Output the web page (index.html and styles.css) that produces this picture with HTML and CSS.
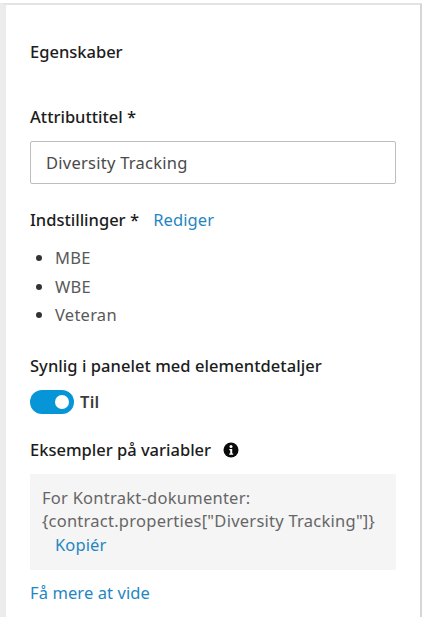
FILE: index.html
```html
<!DOCTYPE html>
<html lang="da">
<head>
<meta charset="utf-8">
<title>Egenskaber</title>
<link rel="stylesheet" href="styles.css">
</head>
<body>
<main class="panel">
  <h2 class="title">Egenskaber</h2>
  <label class="label label-attr">Attributtitel *</label>
  <div class="input">Diversity Tracking</div>
  <div class="label label-opts">Indstillinger * <a class="link edit">Rediger</a></div>
  <ul class="options">
    <li>MBE</li>
    <li>WBE</li>
    <li>Veteran</li>
  </ul>
  <div class="label label-vis">Synlig i panelet med elementdetaljer</div>
  <div class="toggle-row">
    <span class="toggle"><span class="knob"></span></span>
    <span class="toggle-text">Til</span>
  </div>
  <div class="label label-ex">Eksempler på variabler
    <svg class="info" viewBox="0 0 16 16" width="16" height="16" aria-hidden="true">
      <circle cx="8" cy="8" r="7.5" fill="#0a0a0a"/>
      <circle cx="8" cy="4.4" r="1.5" fill="#fff"/>
      <path d="M6.3 6.9h2.9v4.6h1v1.3H6.2v-1.3h1V8.2h-.9z" fill="#fff"/>
    </svg>
  </div>
  <div class="examples">
    <div>For Kontrakt-dokumenter:</div>
    <div>{contract.properties["Diversity Tracking"]}</div>
    <a class="link copy">Kopiér</a>
  </div>
  <a class="link more">Få mere at vide</a>
</main>
</body>
</html>
```
FILE: styles.css
```css
html, body {
  margin: 0;
  height: 100%;
  background: #fff;
}
body {
  overflow: hidden;
  font-family: "Noto Sans", "Open Sans", sans-serif;
  font-size: 16.5px;
  letter-spacing: 0.25px;
  color: #2a2a2a;
  padding: 3px 2px 2px 0;
  box-sizing: border-box;
}
.panel {
  box-sizing: border-box;
  height: 614px;
  border-top: 2px solid #e3e3e3;
  border-left: 6px solid #ececec;
  border-right: 2px solid #d6d6d6;
  padding: 0 24px;
  display: flex;
  flex-direction: column;
}
.title {
  margin: 35px 0 0;
  font-size: 16.5px;
  line-height: 24px;
  font-weight: 500;
  letter-spacing: 0;
  color: #1c1c1c;
}
.label {
  font-size: 16.5px;
  line-height: 24px;
  font-weight: 500;
  letter-spacing: 0;
  color: #1c1c1c;
}
.label-attr { margin-top: 41px; }
.input {
  box-sizing: border-box;
  margin-top: 12px;
  height: 43px;
  border: 1px solid #bdbdbd;
  border-radius: 2px;
  padding: 0 15px;
  line-height: 41px;
  color: #4a4a4a;
}
.label-opts { margin-top: 24px; }
.link { color: #1f86c2; font-weight: 400; letter-spacing: 0.1px; }
.edit { margin-left: 10px; }
.options {
  list-style: disc;
  margin: 12px 0 0;
  padding: 0 0 0 25px;
  color: #595959;
}
.options li { line-height: 28.5px; }
.options li::marker { color: #333; }
.label-vis { margin-top: 24px; letter-spacing: 0.05px; }
.toggle-row {
  margin-top: 12px;
  display: flex;
  align-items: center;
  gap: 6px;
}
.toggle {
  width: 44px;
  height: 24px;
  border-radius: 12px;
  background: #0696d7;
  display: flex;
  align-items: center;
  justify-content: flex-end;
  padding-right: 5px;
  box-sizing: border-box;
}
.knob {
  width: 14px;
  height: 14px;
  border-radius: 50%;
  background: #fff;
}
.toggle-text { font-weight: 600; color: #3c3c3c; }
.label-ex {
  margin-top: 24px;
  display: flex;
  align-items: center;
  gap: 12px;
}
.examples {
  box-sizing: border-box;
  margin-top: 12px;
  height: 96px;
  background: #f5f5f5;
  padding: 12px;
  line-height: 23.5px;
  color: #666;
  white-space: nowrap;
}
.copy { display: block; margin-left: 13px; }
.more { margin-top: 11px; line-height: 24px; }
```
